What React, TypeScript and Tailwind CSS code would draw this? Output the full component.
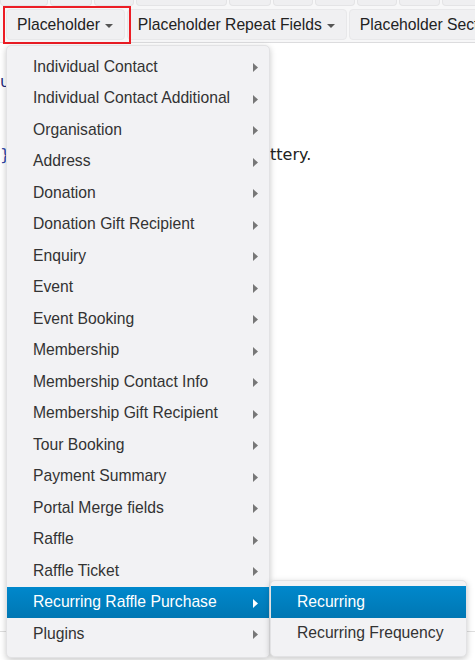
import React from "react";

const menuItems = [
  "Individual Contact",
  "Individual Contact Additional",
  "Organisation",
  "Address",
  "Donation",
  "Donation Gift Recipient",
  "Enquiry",
  "Event",
  "Event Booking",
  "Membership",
  "Membership Contact Info",
  "Membership Gift Recipient",
  "Tour Booking",
  "Payment Summary",
  "Portal Merge fields",
  "Raffle",
  "Raffle Ticket",
  "Recurring Raffle Purchase",
  "Plugins",
];

const topStubs = [48, 42, 40, 91, 42, 40, 40, 40, 41, 40];

const Caret = () => (
  <svg width="8" height="4" viewBox="0 0 8 4" className="ml-[5px] mt-[3px] shrink-0">
    <path d="M0 0h8L4 4z" fill="#555" />
  </svg>
);

const SubArrow = ({ active }: { active?: boolean }) => (
  <svg width="5" height="9" viewBox="0 0 5 9" className="absolute right-[11px] top-[12px]">
    <path d="M0 0l5 4.5L0 9z" fill={active ? "#fff" : "#777"} />
  </svg>
);

const ToolButton = ({ label }: { label: string }) => (
  <div className="flex items-center h-[31px] pl-[10px] pr-[11px] bg-[#f0f0f2] border border-[#e8e8ea] rounded-[4px] text-[15.7px] text-[#222] whitespace-nowrap shrink-0">
    {label}
    <Caret />
  </div>
);

const App = () => {
  return (
    <div className="relative w-[475px] h-[660px] overflow-hidden bg-white font-['Liberation_Sans',Arial,sans-serif]">
      {/* toolbar */}
      <div className="bg-[#f7f7f8] border-b border-[#dcdcde]">
        <div className="flex gap-[2px] h-[6px] overflow-hidden">
          {topStubs.map((w, i) => (
            <div
              key={i}
              style={{ width: w }}
              className="h-[6px] shrink-0 bg-[#efeff1] border border-t-0 border-[#e4e4e6] rounded-b-[4px]"
            />
          ))}
          <div className="flex-1 h-[6px] bg-[#efeff1] border border-t-0 border-[#e4e4e6] rounded-b-[4px]" />
        </div>
        <div className="flex items-center gap-[2px] pl-[6px] pt-[3px] pb-[2px] overflow-hidden">
          <ToolButton label="Placeholder" />
          <ToolButton label="Placeholder Repeat Fields" />
          <ToolButton label="Placeholder Section" />
        </div>
      </div>

      {/* red highlight annotation */}
      <div className="absolute left-[3px] top-[6px] w-[128px] h-[38px] border-2 border-[#ec1c24]" />

      {/* page content behind the menu */}
      <div className="pt-[32px] text-[16px] text-[#222] font-['DejaVu_Sans',sans-serif]">
        <div className="text-[#1f2a7a] leading-[14px]">u</div>
        <div className="flex mt-[54px] leading-[24px]">
          <span className="text-[#2a44a8] w-[270px]">{"}"}</span>
          <span>ttery.</span>
        </div>
        <div className="mt-[464px] border-t border-[#dedede]" />
      </div>

      {/* dropdown menu */}
      <div className="absolute left-[6px] top-[45px] w-[264px] pt-[5px] pb-[7px] bg-[#f2f2f4] rounded-[5px] shadow-[0_2px_6px_rgba(0,0,0,0.22)] border border-[#e2e2e4] text-[15.7px]">
        {menuItems.map((item) => {
          const active = item === "Recurring Raffle Purchase";
          return (
            <div
              key={item}
              className={
                "relative h-[31.5px] flex items-center pl-[26px] " +
                (active
                  ? "bg-gradient-to-b from-[#0088cc] to-[#0077b3] text-white"
                  : "text-[#333]")
              }
            >
              {item}
              <SubArrow active={active} />
            </div>
          );
        })}
      </div>

      {/* submenu */}
      <div className="absolute left-[270px] top-[580px] w-[197px] pt-[5px] pb-[7px] bg-[#f2f2f4] rounded-[5px] shadow-[0_2px_6px_rgba(0,0,0,0.22)] border border-[#e2e2e4] text-[15.7px]">
        <div className="h-[31.5px] flex items-center pl-[26px] bg-gradient-to-b from-[#0088cc] to-[#0077b3] text-white">
          Recurring
        </div>
        <div className="h-[31.5px] flex items-center pl-[26px] text-[#333]">
          Recurring Frequency
        </div>
      </div>
    </div>
  );
};

export default App;
